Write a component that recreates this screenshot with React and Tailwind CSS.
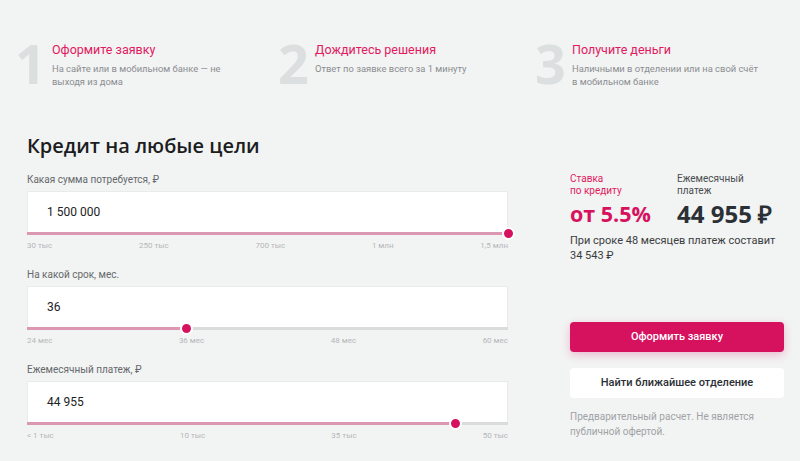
import React from "react";

const steps = [
  {
    num: "1",
    title: "Оформите заявку",
    text: "На сайте или в мобильном банке — не выходя из дома",
    w: "w-[263px]",
  },
  {
    num: "2",
    title: "Дождитесь решения",
    text: "Ответ по заявке всего за 1 минуту",
    w: "w-[257px]",
  },
  {
    num: "3",
    title: "Получите деньги",
    text: "Наличными в отделении или на свой счёт в мобильном банке",
    w: "w-[257px]",
  },
];

const sliders = [
  {
    label: "Какая сумма потребуется, ₽",
    value: "1 500 000",
    pct: 100,
    ticks: ["30 тыс", "250 тыс", "700 тыс", "1 млн", "1,5 млн"],
  },
  {
    label: "На какой срок, мес.",
    value: "36",
    pct: 33,
    ticks: ["24 мес", "36 мес", "48 мес", "60 мес"],
  },
  {
    label: "Ежемесячный платеж, ₽",
    value: "44 955",
    pct: 89,
    ticks: ["< 1 тыс", "10 тыс", "35 тыс", "50 тыс"],
  },
];

function Step({ num, title, text, w }) {
  return (
    <div className={`flex ${w}`}>
      <div className="w-[37px] text-right pr-[9px] text-[54px] leading-[40px] font-bold text-[#dcdfdf] font-['Open_Sans',sans-serif] mt-[1px]">
        {num}
      </div>
      <div className="w-[200px]">
        <div className="text-[12.5px] leading-[16px] text-[#e2195f]">{title}</div>
        <div className="mt-[4px] w-[192px] text-[9.4px] leading-[13px] text-[#8a8e91]">{text}</div>
      </div>
    </div>
  );
}

function Slider({ label, value, pct, ticks }) {
  return (
    <div>
      <div className="text-[10px] leading-[13px] text-[#66696c]">{label}</div>
      <div className="mt-[5px] h-[41px] bg-white border border-[#e9eaea] border-b-0 flex items-center pl-[19px] text-[12px] text-[#222]">
        {value}
      </div>
      <div className="relative h-[3px] bg-[#dadbdd]">
        <div className="h-full bg-[#dc98b3]" style={{ width: `${pct}%` }} />
        <div
          className="absolute top-[-5px] w-[13px] h-[13px] -ml-[6px] rounded-full bg-[#d6125f] border-2 border-white"
          style={{ left: `${pct}%` }}
        />
      </div>
      <div className="mt-[6px] flex justify-between text-[8px] leading-[10px] text-[#b4b7b9]">
        {ticks.map((t) => (
          <span key={t}>{t}</span>
        ))}
      </div>
    </div>
  );
}

export default function App() {
  return (
    <div className="w-[800px] h-[461px] overflow-hidden bg-[#f2f3f3] font-['Roboto',sans-serif]">
      <div className="flex pl-[15px] pt-[42px]">
        {steps.map((s) => (
          <Step key={s.num} {...s} />
        ))}
      </div>

      <div className="flex pl-[27px] pt-[45px]">
        <div className="w-[481px]">
          <h1 className="text-[20px] leading-[26px] font-semibold text-[#1b1d21] font-['Open_Sans',sans-serif]">
            Кредит на любые цели
          </h1>
          <div className="mt-[14px] flex flex-col gap-[17px]">
            {sliders.map((s) => (
              <Slider key={s.label} {...s} />
            ))}
          </div>
        </div>

        <div className="ml-[62px] w-[214px] pt-[40px]">
          <div className="flex">
            <div className="w-[107px]">
              <div className="text-[10px] leading-[12px] text-[#e2195f]">
                Ставка
                <br />
                по кредиту
              </div>
              <div className="mt-[3px] text-[21.5px] leading-[28px] font-bold text-[#d6125f] font-['Open_Sans',sans-serif]">
                от 5.5%
              </div>
            </div>
            <div>
              <div className="text-[10px] leading-[12px] text-[#4a4d51]">
                Ежемесячный
                <br />
                платеж
              </div>
              <div className="mt-[3px] text-[24px] leading-[28px] font-bold text-[#2b3036] font-['Open_Sans',sans-serif]">
                44 955 ₽
              </div>
            </div>
          </div>
          <div className="mt-[5px] text-[11px] leading-[15px] text-[#3a3d40]">
            При сроке 48 месяцев платеж составит 34 543 ₽
          </div>

          <button className="mt-[59px] w-full h-[30px] rounded-[4px] bg-[#d6125f] text-white text-[11px] font-medium shadow-[0_3px_8px_rgba(214,18,95,0.25)]">
            Оформить заявку
          </button>
          <button className="mt-[16px] w-full h-[30px] rounded-[4px] bg-white text-[#2b3036] text-[11px] font-medium">
            Найти ближайшее отделение
          </button>
          <div className="mt-[11px] text-[10px] leading-[15px] text-[#a0a3a6]">
            Предварительный расчет. Не является публичной офертой.
          </div>
        </div>
      </div>
    </div>
  );
}
